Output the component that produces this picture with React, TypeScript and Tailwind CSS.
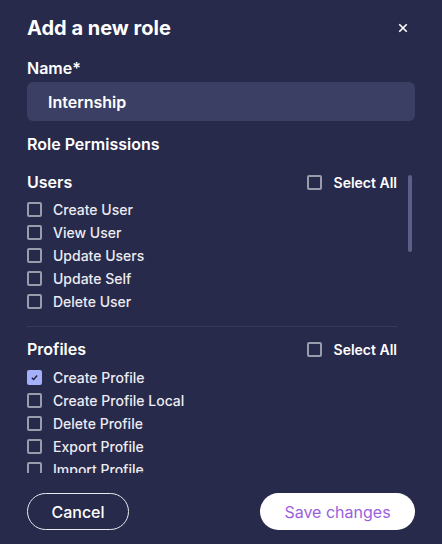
import { useState } from "react";

type Group = { title: string; items: string[] };

const groups: Group[] = [
  { title: "Users", items: ["Create User", "View User", "Update Users", "Update Self", "Delete User"] },
  {
    title: "Profiles",
    items: ["Create Profile", "Create Profile Local", "Delete Profile", "Export Profile", "Import Profile"],
  },
];

function Checkbox({ checked, onChange }: { checked: boolean; onChange: () => void }) {
  return (
    <button
      type="button"
      onClick={onChange}
      className={`flex h-[15px] w-[15px] shrink-0 items-center justify-center rounded-[2px] border-2 ${
        checked ? "border-[#a5b0fa] bg-[#a5b0fa]" : "border-[#9a9cab] bg-transparent"
      }`}
    >
      {checked && (
        <svg viewBox="0 0 10 10" className="h-[9px] w-[9px]" fill="none" stroke="#1c1e38" strokeWidth="1.4">
          <path d="M2 5.2l2 2 4-4.4" />
        </svg>
      )}
    </button>
  );
}

export default function App() {
  const [checked, setChecked] = useState<Record<string, boolean>>({ "Create Profile": true });
  const toggle = (k: string) => setChecked((c) => ({ ...c, [k]: !c[k] }));

  return (
    <div
      className="flex h-[544px] w-[442px] flex-col bg-[#282a4b] px-[27px] pt-[14px] text-white"
      style={{ fontFamily: "Inter, 'Noto Sans', sans-serif" }}
    >
      <div className="flex h-[28px] items-center justify-between">
        <h1 className="text-[20px] font-bold leading-[28px]">Add a new role</h1>
        <button type="button" className="mr-[6px] flex h-[12px] w-[12px] items-center justify-center">
          <svg viewBox="0 0 12 12" className="h-[10px] w-[10px]" fill="none" stroke="white" strokeWidth="2">
            <path d="M1.5 1.5l9 9M10.5 1.5l-9 9" />
          </svg>
        </button>
      </div>

      <label className="mt-[14px] text-[16px] font-semibold leading-[24px]">Name*</label>
      <div className="mt-[2px] flex h-[39px] items-center rounded-[6px] bg-[#3b3f64] pl-[21px] text-[16px] font-semibold">
        Internship
      </div>

      <h2 className="mt-[11px] text-[16px] font-semibold leading-[24px]">Role Permissions</h2>

      <div className="mt-[14px] flex h-[303px]">
        <div className="w-[370px] overflow-hidden">
          {groups.map((g, gi) => (
            <div key={g.title}>
              {gi > 0 && <div className="mb-[10px] mt-[13px] h-px bg-[#363a5f]" />}
              <div className="flex h-[24px] items-center justify-between">
                <span className="text-[16px] font-semibold">{g.title}</span>
                <div className="flex items-center gap-[12px]">
                  <Checkbox checked={false} onChange={() => {}} />
                  <span className="text-[14px] font-semibold">Select All</span>
                </div>
              </div>
              <div className={gi === 0 ? "mt-[4px]" : "mt-[5px]"}>
                {g.items.map((item) => (
                  <div key={item} className="flex h-[23px] items-center gap-[11px]">
                    <Checkbox checked={!!checked[item]} onChange={() => toggle(item)} />
                    <span className="text-[14px] font-medium text-[#ececf2]">{item}</span>
                  </div>
                ))}
              </div>
            </div>
          ))}
        </div>
        <div className="ml-[11px] w-[4px]">
          <div className="mt-[5px] h-[77px] rounded-full bg-[#5c6088]" />
        </div>
      </div>

      <div className="mt-[20px] flex items-center justify-between">
        <button
          type="button"
          className="h-[37px] w-[102px] rounded-full border border-[#e8e8ee] text-[16px] font-medium text-white"
        >
          Cancel
        </button>
        <button
          type="button"
          className="h-[37px] w-[155px] rounded-full bg-white text-[16px] font-normal text-[#9b5fe0]"
        >
          Save changes
        </button>
      </div>
    </div>
  );
}
